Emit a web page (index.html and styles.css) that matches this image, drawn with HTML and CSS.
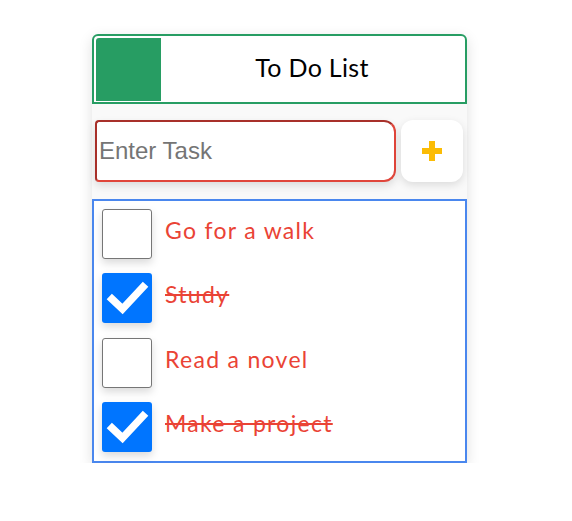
FILE: index.html
```html
<!DOCTYPE html>
<html>
<head>
<meta charset="utf-8">
<link rel="stylesheet" href="styles.css">
</head>
<body>
<div class="card">
  <div class="header">
    <div class="logo"></div>
    <h1 class="title">To Do List</h1>
  </div>
  <div class="input-row">
    <input class="task-input" type="text" placeholder="Enter Task">
    <button class="add-btn" type="button" aria-label="Add">
      <svg width="20" height="20" viewBox="0 0 20 20"><rect x="7" y="0" width="6" height="20" fill="#fbbc05"/><rect x="0" y="7" width="20" height="6" fill="#fbbc05"/></svg>
    </button>
  </div>
  <ul class="list">
    <li class="item">
      <span class="box"></span>
      <span class="text">Go for a walk</span>
    </li>
    <li class="item done">
      <span class="box checked"><svg width="50" height="50" viewBox="0 0 50 50"><path d="M10 26 L20.5 36 L41 14" fill="none" stroke="#fff" stroke-width="7.5" stroke-linecap="square"/></svg></span>
      <span class="text">Study</span>
    </li>
    <li class="item">
      <span class="box"></span>
      <span class="text">Read a novel</span>
    </li>
    <li class="item done">
      <span class="box checked"><svg width="50" height="50" viewBox="0 0 50 50"><path d="M10 26 L20.5 36 L41 14" fill="none" stroke="#fff" stroke-width="7.5" stroke-linecap="square"/></svg></span>
      <span class="text">Make a project</span>
    </li>
  </ul>
</div>
</body>
</html>
```
FILE: styles.css
```css
* { box-sizing: border-box; }
body {
  margin: 0;
  background: #fff;
  font-family: Lato, "Noto Sans", sans-serif;
}
.card {
  width: 375px;
  margin: 34px 0 0 92px;
  background: #f9f9f9;
  box-shadow: 0 4px 14px rgba(0, 0, 0, 0.13);
  border-radius: 6px 6px 0 0;
}
.header {
  height: 70px;
  display: flex;
  align-items: flex-start;
  border: 2px solid #279d63;
  border-radius: 6px 6px 0 0;
  background: #fff;
  padding: 2px 2px 1px 2px;
}
.logo {
  width: 65px;
  height: 63px;
  background: #279d63;
  border-radius: 3px 0 0 0;
  flex: none;
}
.title {
  flex: 1;
  margin: 0;
  text-align: center;
  font-weight: 400;
  font-size: 25px;
  line-height: 58px;
  letter-spacing: 0.3px;
  color: #000;
}
.input-row {
  display: flex;
  gap: 5px;
  padding: 16px 4px 17px 3px;
}
.task-input {
  width: 301px;
  height: 62px;
  border: 2px solid #e0453a;
  border-top-color: #a8302a;
  border-left-color: #a8302a;
  border-radius: 4px 12px 12px 4px;
  font-family: "Liberation Sans", Arial, sans-serif;
  font-size: 24px;
  padding: 0 2px;
  background: #fff;
  box-shadow: 0 4px 8px rgba(0, 0, 0, 0.12);
  outline: none;
}
.task-input::placeholder { color: #757575; }
.add-btn {
  width: 62px;
  height: 62px;
  border: none;
  border-radius: 12px;
  background: #fff;
  box-shadow: 0 3px 8px rgba(0, 0, 0, 0.12);
  display: flex;
  align-items: center;
  justify-content: center;
  padding: 0;
}
.list {
  list-style: none;
  margin: 0;
  background: #fff;
  border: 2px solid #4a87ee;
  padding: 8px 8px 9px 8px;
  display: flex;
  flex-direction: column;
  gap: 14.33px;
}
.item {
  display: flex;
  align-items: center;
  height: 50px;
  gap: 13px;
}
.box {
  width: 50px;
  height: 50px;
  flex: none;
  border: 1px solid #767676;
  border-radius: 3px;
  background: #fff;
  box-shadow: 0 4px 8px rgba(0, 0, 0, 0.15);
}
.box.checked {
  border: none;
  background: #0075ff;
}
.box svg { display: block; }
.text {
  color: #ea4335;
  font-size: 23px;
  letter-spacing: 1.3px;
  padding-bottom: 8px;
}
.done .text {
  text-decoration: line-through;
  text-decoration-thickness: 2px;
}
```
